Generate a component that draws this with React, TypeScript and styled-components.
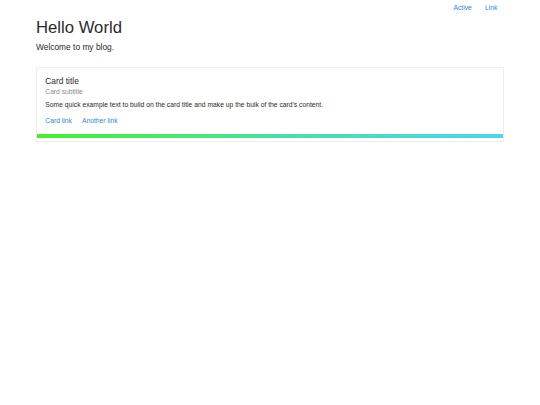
import React from "react";
import styled, { createGlobalStyle } from "styled-components";

const Global = createGlobalStyle`
  html, body { margin: 0; padding: 0; background: #fff; }
  body { font-family: "Liberation Sans", Arial, sans-serif; color: #2b2b2b; font-size: 6.75px; line-height: 1.5; }
  * { box-sizing: border-box; }
`;

const Nav = styled.nav`
  display: flex;
  justify-content: flex-end;
  padding: 2px 36px 0 0;
`;

const NavLink = styled.a`
  color: #2f86e0;
  text-decoration: none;
  font-size: 6.75px;
  padding: 1px 6.6px;
`;

const Container = styled.main`
  width: 468px;
  margin: 0 0 0 36px;
`;

const Title = styled.h1`
  margin: 4px 0 0;
  font-size: 16.7px;
  font-weight: 400;
  line-height: 1.2;
  color: #2b2b2b;
`;

const Lead = styled.p`
  margin: 3px 0 0;
  font-size: 8.4px;
  font-weight: 400;
`;

const Card = styled.section`
  margin-top: 13px;
  border: 1px solid rgba(0, 0, 0, 0.07);
  border-radius: 1.5px;
  background: #fff;
  padding-bottom: 3px;
`;

const CardBody = styled.div`
  padding: 8.3px 8.3px 8px;
`;

const CardTitle = styled.h5`
  margin: 0 0 2px;
  font-size: 8.4px;
  font-weight: 400;
  line-height: 1.2;
`;

const CardSubtitle = styled.h6`
  margin: 0 0 4px;
  font-size: 6.7px;
  font-weight: 400;
  color: #8a8a8a;
  line-height: 1.2;
`;

const CardText = styled.p`
  margin: 0 0 6px;
  font-size: 6.75px;
`;

const LinkRow = styled.div`
  display: flex;
  gap: 10px;
`;

const CardLink = styled.a`
  color: #2f86e0;
  text-decoration: none;
  font-size: 6.75px;
`;

const GradientBar = styled.div`
  height: 4px;
  background: linear-gradient(90deg, #44f02a 0%, #4ee0a0 50%, #4ad4f2 100%);
`;

export default function App() {
  return (
    <>
      <Global />
      <Nav>
        <NavLink href="#">Active</NavLink>
        <NavLink href="#">Link</NavLink>
      </Nav>
      <Container>
        <Title>Hello World</Title>
        <Lead>Welcome to my blog.</Lead>
        <Card>
          <CardBody>
            <CardTitle>Card title</CardTitle>
            <CardSubtitle>Card subtitle</CardSubtitle>
            <CardText>
              Some quick example text to build on the card title and make up the bulk of the card's content.
            </CardText>
            <LinkRow>
              <CardLink href="#">Card link</CardLink>
              <CardLink href="#">Another link</CardLink>
            </LinkRow>
          </CardBody>
          <GradientBar />
        </Card>
      </Container>
    </>
  );
}
